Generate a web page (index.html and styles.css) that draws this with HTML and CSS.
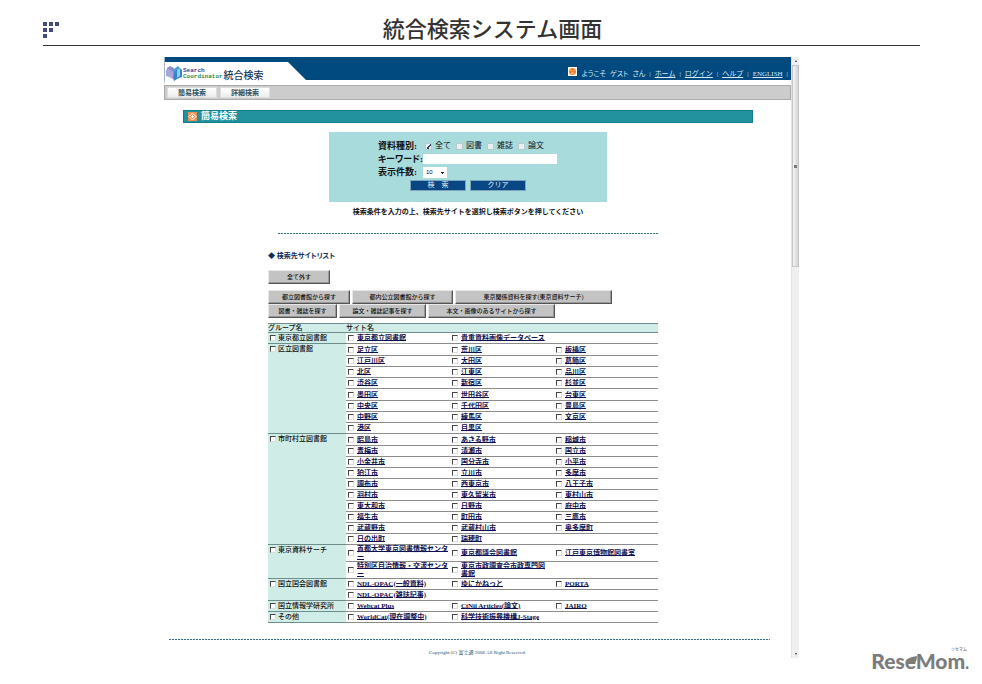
FILE: index.html
```html
<!DOCTYPE html>
<html lang="ja">
<head>
<meta charset="utf-8">
<title>統合検索システム画面</title>
<link rel="stylesheet" href="styles.css">
</head>
<body>
<div class="slide">
  <header class="slide-head">
    <svg class="mark" width="16" height="16" viewBox="0 0 16 16" fill="#454a7c" aria-hidden="true"><path d="M0 0h4v4H0zM6 0h4v4H6zM12 0h4v4h-4zM0 6h4v4H0zM6 6h4v4H6zM0 12h4v4H0z"/></svg>
    <h1>統合検索システム画面</h1>
  </header>

  <div class="app">
    <main class="screen">
      <header class="banner">
        <div class="brand">
          <svg width="16" height="15" viewBox="0 0 16 15" aria-hidden="true">
            <path d="M1 2l3-2 4 2v10l-4-2-3-1z" fill="#8a8cc8"/><path d="M0 4l3-1 4 3v7l-4-2-3-1z" fill="#a9a6dc"/>
            <path d="M8 3l4-3 2 2v9l-6 2z" fill="#4d9fdc"/><path d="M9 5l5-3 2 2v7l-5 2-3 2-1-3z" fill="#3585c6"/><path d="M11 4l3-2v8l-3 2z" fill="#8fd0f0"/>
          </svg>
          <div class="brand-en"><span class="violet">Search</span><span class="green">Coordinator</span></div>
          <span class="brand-ja">統合検索</span>
        </div>
        <nav class="user-nav">
          <svg width="9" height="9" viewBox="0 0 9 9" aria-hidden="true"><rect width="9" height="9" fill="#fff"/><circle cx="4.500" cy="4.500" r="3.500" fill="#f08030"/><path d="M3 3v1M6 3v1M3 6h3" stroke="#ffd9a8" fill="none"/></svg>
          <span>ようこそ</span><span>ゲスト</span><span>さん</span><i>|</i>
          <a href="#">ホーム</a><i>|</i><a href="#">ログイン</a><i>|</i><a href="#">ヘルプ</a><i>|</i><a class="en" href="#">ENGLISH</a><i>|</i>
        </nav>
      </header>
      <div class="tabs"><button type="button">簡易検索</button><button type="button">詳細検索</button></div>

      <h2 class="section-bar">
        <svg width="9" height="9" viewBox="0 0 9 9" aria-hidden="true"><rect width="9" height="9" fill="#ee9150"/><path d="M4.500 1L8 4.500 4.500 8 1 4.500z" fill="none" stroke="#fff"/><path d="M3 4h3v1H3zM4 3h1v3H4z" fill="#fff"/></svg>
        簡易検索
      </h2>

      <form class="search">
        <div class="fields">
          <span class="name">資料種別:</span>
          <div class="kinds">
            <label><input type="checkbox" checked>全て</label>
            <label><input type="checkbox">図書</label>
            <label><input type="checkbox">雑誌</label>
            <label><input type="checkbox">論文</label>
          </div>
          <label class="name" for="kw">キーワード:</label>
          <input id="kw" class="keyword" type="text">
          <label class="name" for="count">表示件数:</label>
          <select id="count"><option>10</option></select>
        </div>
        <div class="actions"><button type="button">検　索</button><button type="button">クリア</button></div>
      </form>
      <p class="notice">検索条件を入力の上、検索先サイトを選択し検索ボタンを押してください</p>
      <hr class="dots">

      <section class="sites">
        <h3>◆ 検索先サイトリスト</h3>
        <div class="picks"><button type="button" class="xs">全て外す</button></div>
        <div class="picks"><button type="button" class="m">都立図書館から探す</button><button type="button" class="l">都内公立図書館から探す</button><button type="button" class="xxl">東京関係資料を探す(東京資料サーチ)</button></div>
        <div class="picks"><button type="button" class="s">図書・雑誌を探す</button><button type="button" class="m">論文・雑誌記事を探す</button><button type="button" class="xl">本文・画像のあるサイトから探す</button></div>

        <table>
          <colgroup><col class="c-group"><col class="c-site"><col class="c-site"><col class="c-site"></colgroup>
          <thead><tr><th>グループ名</th><th colspan="3">サイト名</th></tr></thead>
          <tbody>
            <tr><th><label><input type="checkbox">東京都立図書館</label></th><td><label><input type="checkbox"><a href="#">東京都立図書館</a></label></td><td><label><input type="checkbox"><a href="#">貴重資料画像データベース</a></label></td><td></td></tr>
          </tbody>
          <tbody class="wards">
            <tr><th rowspan="8"><label><input type="checkbox">区立図書館</label></th><td><label><input type="checkbox"><a href="#">足立区</a></label></td><td><label><input type="checkbox"><a href="#">荒川区</a></label></td><td><label><input type="checkbox"><a href="#">板橋区</a></label></td></tr>
            <tr><td><label><input type="checkbox"><a href="#">江戸川区</a></label></td><td><label><input type="checkbox"><a href="#">大田区</a></label></td><td><label><input type="checkbox"><a href="#">葛飾区</a></label></td></tr>
            <tr><td><label><input type="checkbox"><a href="#">北区</a></label></td><td><label><input type="checkbox"><a href="#">江東区</a></label></td><td><label><input type="checkbox"><a href="#">品川区</a></label></td></tr>
            <tr><td><label><input type="checkbox"><a href="#">渋谷区</a></label></td><td><label><input type="checkbox"><a href="#">新宿区</a></label></td><td><label><input type="checkbox"><a href="#">杉並区</a></label></td></tr>
            <tr><td><label><input type="checkbox"><a href="#">墨田区</a></label></td><td><label><input type="checkbox"><a href="#">世田谷区</a></label></td><td><label><input type="checkbox"><a href="#">台東区</a></label></td></tr>
            <tr><td><label><input type="checkbox"><a href="#">中央区</a></label></td><td><label><input type="checkbox"><a href="#">千代田区</a></label></td><td><label><input type="checkbox"><a href="#">豊島区</a></label></td></tr>
            <tr><td><label><input type="checkbox"><a href="#">中野区</a></label></td><td><label><input type="checkbox"><a href="#">練馬区</a></label></td><td><label><input type="checkbox"><a href="#">文京区</a></label></td></tr>
            <tr><td><label><input type="checkbox"><a href="#">港区</a></label></td><td><label><input type="checkbox"><a href="#">目黒区</a></label></td><td></td></tr>
          </tbody>
          <tbody class="cities">
            <tr><th rowspan="10"><label><input type="checkbox">市町村立図書館</label></th><td><label><input type="checkbox"><a href="#">昭島市</a></label></td><td><label><input type="checkbox"><a href="#">あきる野市</a></label></td><td><label><input type="checkbox"><a href="#">稲城市</a></label></td></tr>
            <tr><td><label><input type="checkbox"><a href="#">青梅市</a></label></td><td><label><input type="checkbox"><a href="#">清瀬市</a></label></td><td><label><input type="checkbox"><a href="#">国立市</a></label></td></tr>
            <tr><td><label><input type="checkbox"><a href="#">小金井市</a></label></td><td><label><input type="checkbox"><a href="#">国分寺市</a></label></td><td><label><input type="checkbox"><a href="#">小平市</a></label></td></tr>
            <tr><td><label><input type="checkbox"><a href="#">狛江市</a></label></td><td><label><input type="checkbox"><a href="#">立川市</a></label></td><td><label><input type="checkbox"><a href="#">多摩市</a></label></td></tr>
            <tr><td><label><input type="checkbox"><a href="#">調布市</a></label></td><td><label><input type="checkbox"><a href="#">西東京市</a></label></td><td><label><input type="checkbox"><a href="#">八王子市</a></label></td></tr>
            <tr><td><label><input type="checkbox"><a href="#">羽村市</a></label></td><td><label><input type="checkbox"><a href="#">東久留米市</a></label></td><td><label><input type="checkbox"><a href="#">東村山市</a></label></td></tr>
            <tr><td><label><input type="checkbox"><a href="#">東大和市</a></label></td><td><label><input type="checkbox"><a href="#">日野市</a></label></td><td><label><input type="checkbox"><a href="#">府中市</a></label></td></tr>
            <tr><td><label><input type="checkbox"><a href="#">福生市</a></label></td><td><label><input type="checkbox"><a href="#">町田市</a></label></td><td><label><input type="checkbox"><a href="#">三鷹市</a></label></td></tr>
            <tr><td><label><input type="checkbox"><a href="#">武蔵野市</a></label></td><td><label><input type="checkbox"><a href="#">武蔵村山市</a></label></td><td><label><input type="checkbox"><a href="#">奥多摩町</a></label></td></tr>
            <tr><td><label><input type="checkbox"><a href="#">日の出町</a></label></td><td><label><input type="checkbox"><a href="#">瑞穂町</a></label></td><td></td></tr>
          </tbody>
          <tbody>
            <tr><th rowspan="2"><label><input type="checkbox">東京資料サーチ</label></th><td><label><input type="checkbox"><a href="#">首都大学東京図書情報センタ<br>ー</a></label></td><td><label><input type="checkbox"><a href="#">東京都議会図書館</a></label></td><td><label><input type="checkbox"><a href="#">江戸東京博物館図書室</a></label></td></tr>
            <tr><td><label><input type="checkbox"><a href="#">特別区自治情報・交流センタ<br>ー</a></label></td><td><label><input type="checkbox"><a href="#">東京市政調査会市政専門図<br>書館</a></label></td><td></td></tr>
          </tbody>
          <tbody>
            <tr><th rowspan="2"><label><input type="checkbox">国立国会図書館</label></th><td><label><input type="checkbox"><a href="#">NDL-OPAC(一般資料)</a></label></td><td><label><input type="checkbox"><a href="#">ゆにかねっと</a></label></td><td><label><input type="checkbox"><a href="#">PORTA</a></label></td></tr>
            <tr><td><label><input type="checkbox"><a href="#">NDL-OPAC(雑誌記事)</a></label></td><td></td><td></td></tr>
          </tbody>
          <tbody>
            <tr><th><label><input type="checkbox">国立情報学研究所</label></th><td><label><input type="checkbox"><a href="#">Webcat Plus</a></label></td><td><label><input type="checkbox"><a href="#">CiNii Articles(論文)</a></label></td><td><label><input type="checkbox"><a href="#">JAIRO</a></label></td></tr>
          </tbody>
          <tbody>
            <tr><th><label><input type="checkbox">その他</label></th><td><label><input type="checkbox"><a href="#">WorldCat(現在調整中)</a></label></td><td><label><input type="checkbox"><a href="#">科学技術振興機構J-Stage</a></label></td><td></td></tr>
          </tbody>
        </table>
      </section>

      <hr class="dots wide">
      <p class="copyright">Copyright (C) 富士通 2008 All Right Reserved.</p>
    </main>
    <div class="scrollbar" aria-hidden="true"><span class="up"></span><span class="thumb"></span><span class="down"></span></div>
  </div>
  <div class="watermark">
    <small>リセマム</small>
    <span class="wordmark">ReseMom<span class="stop">.</span></span>
    <svg class="leaf" width="10" height="9" viewBox="0 0 10 9" aria-hidden="true"><path d="M0 7C0 2 4 1 10 0c0 5-2 8-6 8-2 0-4 0-4-1z" fill="#7c7c7c"/></svg>
  </div>
</div>
</body>
</html>
```
FILE: styles.css
```css
* { box-sizing: border-box; }
body {
  margin: 0;
  background: #fff;
  color: #111;
  font-family: "Liberation Serif", "Noto Sans CJK JP", serif;
}
h1, h2, h3, p, hr { margin: 0; }
button, input, select { margin: 0; padding: 0; font: inherit; }
i { font-style: normal; }
svg { display: block; flex: none; }

.slide { position: relative; min-height: 684px; padding: 14px 62px 0 43px; }
.slide-head {
  display: flex;
  align-items: center;
  gap: 6px;
  height: 32px;
  border-bottom: 1px solid #333;
}
.slide-head h1 {
  flex: 1;
  text-align: center;
  font-size: 22px;
  line-height: 30px;
  font-weight: 500;
  color: #333;
}

.app { display: flex; max-width: 635px; margin: 11px auto 0; }
.screen { flex: 1; min-width: 0; }

.banner {
  display: flex;
  justify-content: space-between;
  height: 28px;
  padding-top: 5px;
  border-bottom: 5px solid #fff;
  border-left: 1px solid #9fb4c8;
  background: #004a80;
  background-clip: padding-box;
}
.brand {
  display: flex;
  align-items: center;
  gap: 1px;
  width: 141px;
  height: 23px;
  padding: 0 0 0 1px;
  background: #fff;
  clip-path: polygon(0 0, 123px 0, 141px 18px, 141px 23px, 0 23px);
}
.brand-en {
  display: flex;
  flex-direction: column;
  font: bold 6px/6px "Liberation Mono", monospace;
}
.violet { color: #4b3a8c; }
.green { color: #2a8a50; }
.brand-ja { padding-top: 4px; font-size: 10px; line-height: 12px; font-weight: 500; color: #16395c; }
.user-nav {
  display: flex;
  align-items: center;
  gap: 4px;
  height: 23px;
  padding: 0 3px 0 0;
  font-size: 7px;
  line-height: 10px;
  color: #d5e8f5;
  white-space: nowrap;
}
.user-nav svg { margin: 0 1px 4px 0; }
.user-nav span { font-feature-settings: "palt"; }
.user-nav a { color: inherit; }

.tabs {
  display: flex;
  gap: 3px;
  height: 15px;
  padding: 1px 2px;
  background: #ccc;
  border: 1px solid #aaa;
}
.tabs button {
  width: 50px;
  border: 1px solid #ddd;
  background: linear-gradient(#fff, #ececec);
  font-size: 7px;
  line-height: 8px;
  font-weight: 700;
  color: #2d5363;
}

.section-bar {
  display: flex;
  align-items: center;
  gap: 4px;
  height: 13px;
  margin: 10px 38px 0 19px;
  padding-left: 4px;
  border: 1px solid #137e8b;
  background: #22929f;
  color: #fff;
  font-size: 9px;
  line-height: 11px;
}

.search {
  width: 278px;
  height: 70px;
  margin: 9px 0 0 165px;
  padding-top: 8px;
  background: #a8dbdc;
}
.fields {
  display: grid;
  grid-template-columns: 45px 134px;
  grid-auto-rows: 12px;
  row-gap: 1px;
  align-items: center;
  padding-left: 49px;
  font-size: 8px;
  line-height: 12px;
}
.name { font-weight: 700; font-size: 9px; font-feature-settings: "palt"; white-space: nowrap; }
.kinds { display: flex; gap: 5px; padding-left: 2px; }
.kinds label { display: flex; align-items: center; gap: 3px; }
.kinds input {
  appearance: none;
  width: 7px;
  height: 7px;
  border: 1px solid #b9c9cc;
  background: #e8f0f2;
}
.kinds input:checked {
  background: linear-gradient(135deg, transparent 50%, #34406c 50%, #34406c 70%, transparent 70%), #e8f0f2;
}
.keyword { width: 134px; height: 10px; border: 0; background: #fff; }
#count {
  appearance: none;
  width: 24px;
  height: 11px;
  padding-left: 3px;
  border: 0;
  background: linear-gradient(#222, #222) 18px 5px / 3px 1px no-repeat, linear-gradient(#222, #222) 19px 6px / 1px 1px no-repeat, #fff;
  font: 6px/11px "Liberation Sans", sans-serif;
  color: #111;
}
.actions { display: flex; gap: 4px; margin: 2px 0 0 81px; }
.actions button {
  width: 56px;
  height: 11px;
  border: 1px solid #7fa3bd;
  background: #084684;
  color: #e5eef7;
  font-size: 7px;
  line-height: 9px;
}

.notice {
  width: 278px;
  margin: 5px 0 0 165px;
  text-align: center;
  white-space: nowrap;
  font-size: 7px;
  line-height: 10px;
  font-weight: 700;
}
.dots {
  height: 1px;
  margin: 16px 132px 0 114px;
  border: 0;
  background: repeating-linear-gradient(90deg, #3c7184 0 2px, #dbe9ee 2px 3px);
}

.sites { width: 390px; margin: 17px 0 0 104px; }
.sites h3 { margin-bottom: 9px; font-size: 7px; line-height: 10px; color: #0e2c5a; font-feature-settings: "palt"; }
.picks { display: flex; gap: 2px; }
.picks:first-of-type { margin-bottom: 6px; }
.picks button {
  height: 14px;
  border: 1px solid;
  border-color: #e8e8e8 #555 #555 #e8e8e8;
  background: #c3c3c3;
  box-shadow: inset -1px -1px #999;
  font-size: 6px;
  line-height: 10px;
  font-weight: 500;
  color: #111;
  white-space: nowrap;
}
.picks .xs { width: 62px; }
.picks .s { width: 69px; }
.picks .m { width: 82px; }
.picks .s + .m { width: 87px; }
.picks .l { width: 101px; }
.picks .xl { width: 127px; }
.picks .xxl { width: 157px; }

table {
  width: 100%;
  margin-top: 5px;
  border-spacing: 0;
  table-layout: fixed;
  border-top: 1px solid #6b8f8c;
  font-size: 7px;
  line-height: 8px;
}
.c-group { width: 78px; }
th, td { height: 11px; padding: 0; border-bottom: 1px solid #8c8c8c; vertical-align: middle; white-space: nowrap; }
th { background: #d0ece6; border-color: #6b8f8c; font-weight: 500; text-align: left; vertical-align: top; }
thead th { height: 9px; }
td { font-weight: 700; }
th label { display: flex; align-items: center; gap: 2px; height: 10px; padding-left: 2px; }
td label { display: flex; align-items: center; gap: 3px; padding-left: 2px; }
table input {
  appearance: none;
  flex: none;
  width: 6px;
  height: 6px;
  border: 1px solid;
  border-color: #444 #ddd #ddd #444;
  background: #fff;
}
table a { color: #10104e; text-decoration-thickness: 1px; text-underline-offset: 0; }
.wards tr:nth-child(4n + 1) td:last-child, .cities tr:first-child td:last-child { height: 12px; }

.dots.wide { margin: 16px 21px 0 5px; }
.copyright { margin-top: 9px; padding-bottom: 1px; text-align: center; font-size: 5px; line-height: 8px; color: #24506a; }

.scrollbar {
  display: flex;
  flex-direction: column;
  align-items: center;
  width: 8px;
  background: #efefef;
  border-left: 1px solid #e2e2e2;
}
.up, .down { border: 1px solid transparent; margin: 3px 0; }
.up { border-bottom: 2px solid #333; border-top: 0; }
.down { border-top: 2px solid #333; border-bottom: 0; margin-top: auto; }
.thumb {
  width: 7px;
  height: 202px;
  border: 1px solid #c4c4c4;
  background: linear-gradient(#777, #777) center / 3px 3px no-repeat, linear-gradient(90deg, #f5f5f5, #d4d4d4);
}

.watermark {
  position: absolute;
  right: 13px;
  bottom: 12px;
  display: flex;
  flex-direction: column;
  color: #7c7c7c;
}
.watermark small {
  align-self: flex-end;
  padding-right: 2px;
  font: 500 4px/5px "Noto Sans CJK JP", sans-serif;
}
.wordmark { font: 900 21px/18px Lato, "Liberation Sans", sans-serif; }
.stop { font-size: 16px; }
.leaf { position: absolute; left: 36px; top: 9px; }
```
